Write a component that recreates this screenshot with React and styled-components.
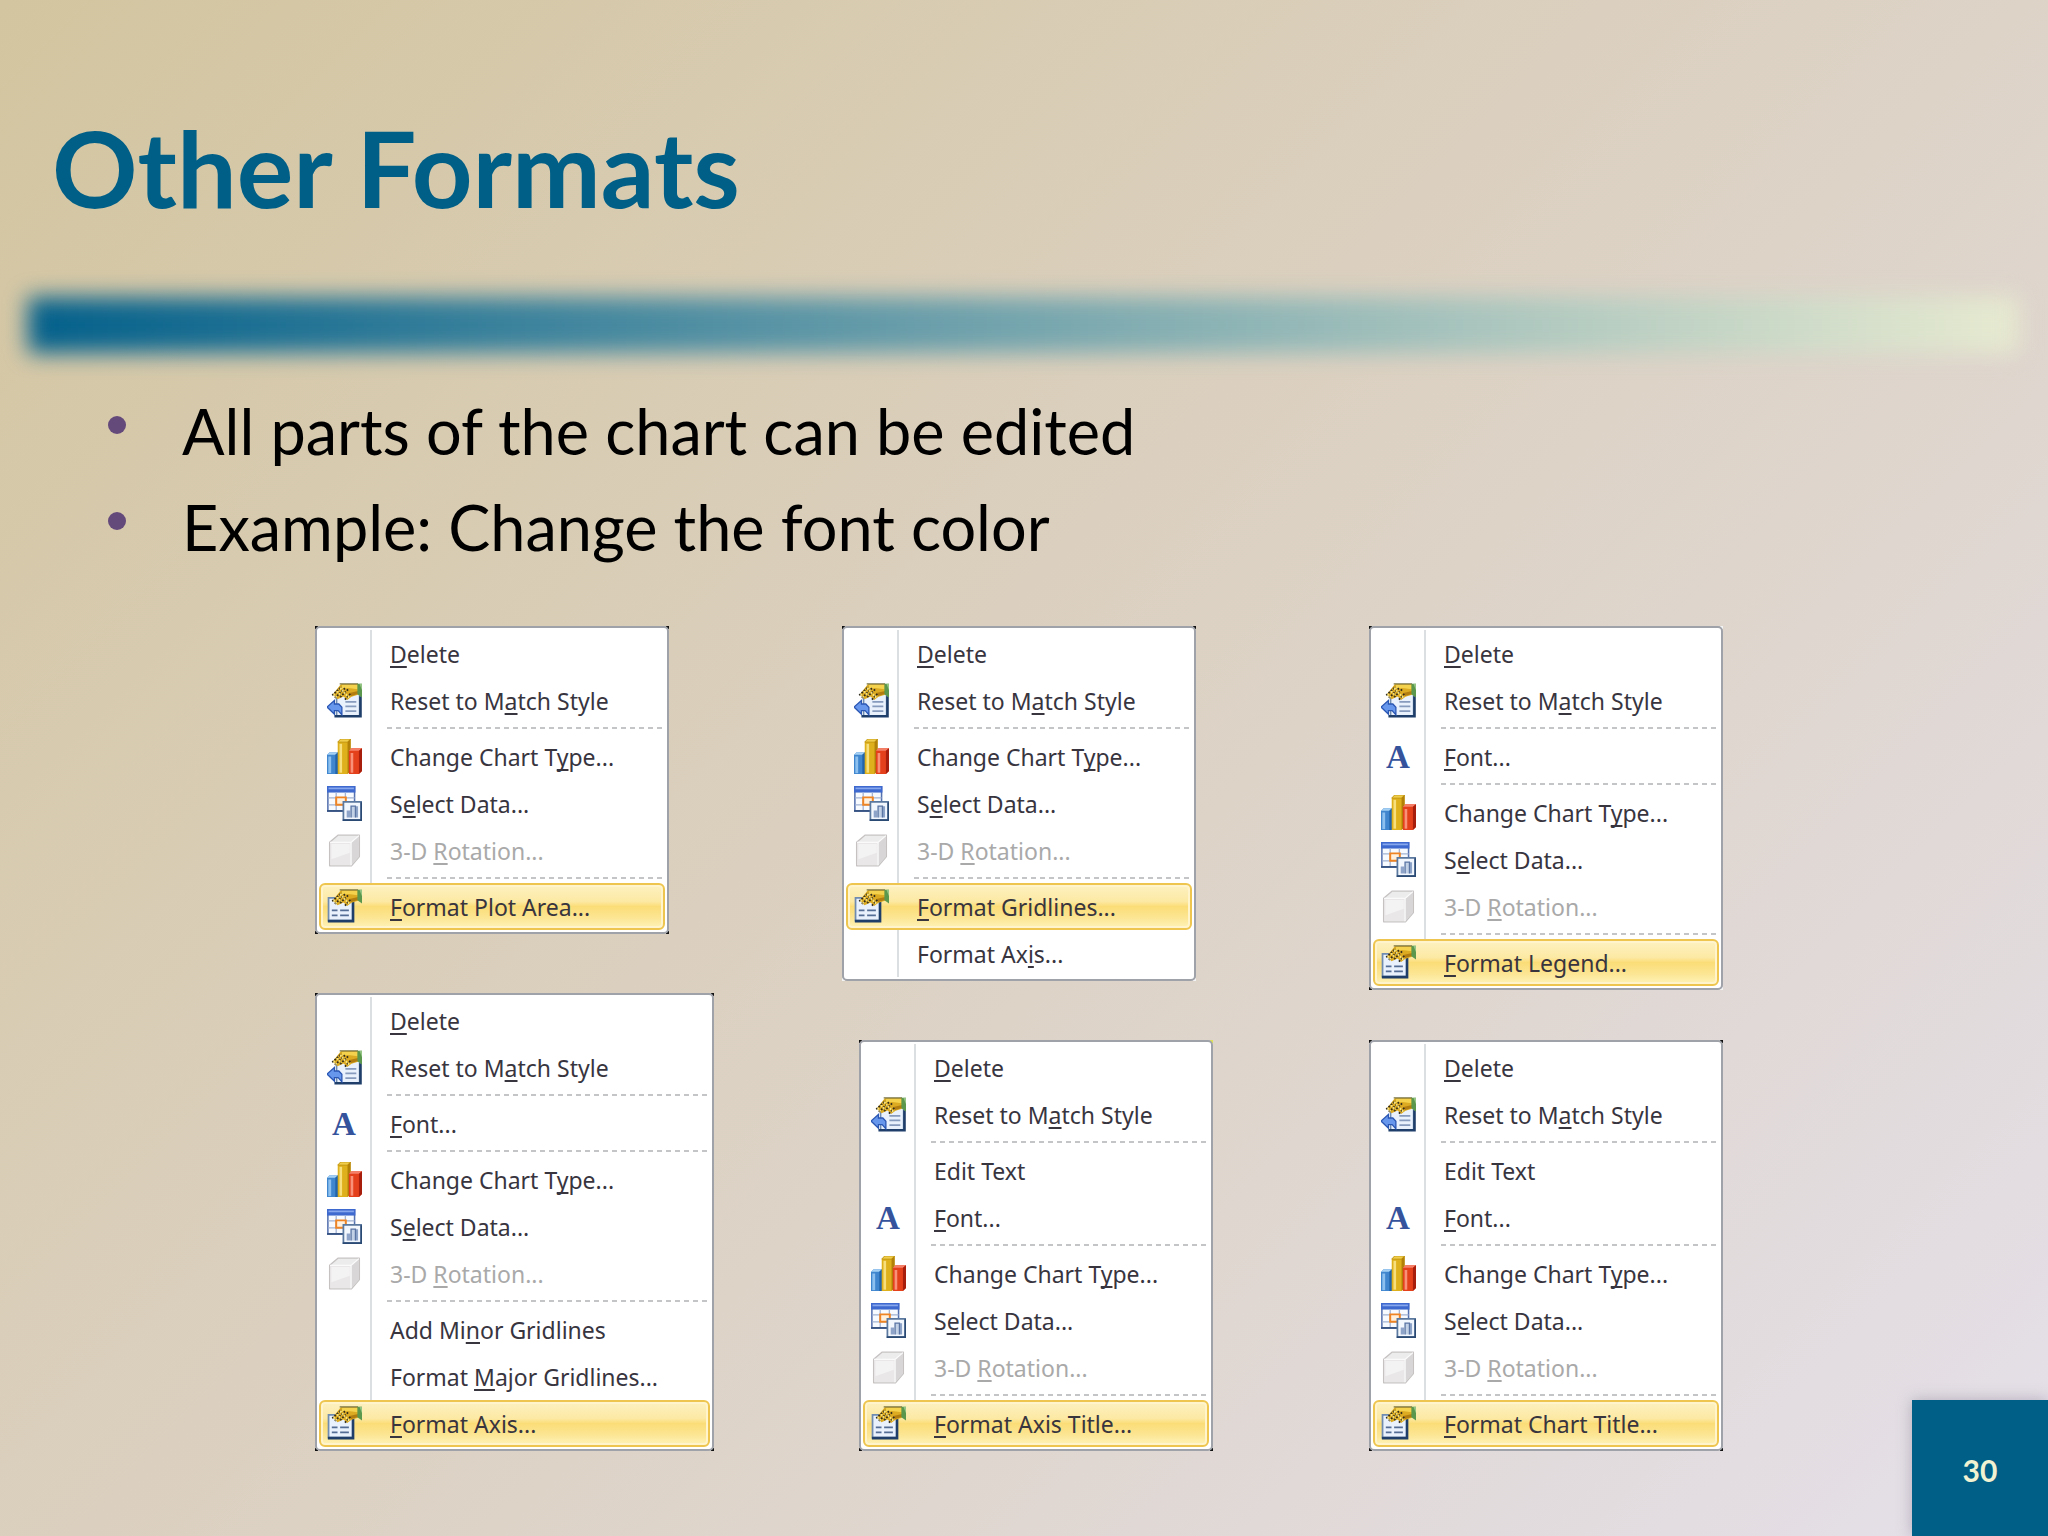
import React from "react";
import styled, { createGlobalStyle, css } from "styled-components";

const GlobalStyle = createGlobalStyle`
  body {
    margin: 0;
  }
`;

const Slide = styled.main`
  box-sizing: border-box;
  min-height: 100vh;
  display: flex;
  flex-direction: column;
  background: linear-gradient(135deg, #d3c59f 0%, #dbd0bf 45%, #dfd6cf 68%, #e5e0ea 100%);
  font-family: Lato, "Liberation Sans", sans-serif;
`;

const Title = styled.h1`
  margin: 0;
  padding: 103px 52px 0;
  color: #005f87;
  font-size: 106px;
  font-weight: 700;
  line-height: 128px;
`;

const Rule = styled.div`
  height: 56px;
  margin: 66px 30px 0 28px;
  background: linear-gradient(to right, #03608b, #e7ead0);
  filter: blur(11px);
`;

const Points = styled.ul`
  margin: 30px 0 0;
  padding: 0 108px;
  list-style: none;
`;

const Point = styled.li`
  display: flex;
  align-items: center;
  color: #000;
  font-size: 63px;
  line-height: 96px;

  &::before {
    content: "";
    width: 18px;
    height: 18px;
    margin: 0 56px 12px 0;
    border-radius: 50%;
    background: #64497b;
  }
`;

const Body = styled.div`
  flex: 1;
  display: flex;
  gap: 16px;
`;

const Menus = styled.section`
  flex: 1;
  display: grid;
  grid-template-columns: repeat(3, 1fr);
  justify-items: start;
  align-items: stretch;
  align-self: flex-start;
  margin: 51px 0 84px;
  padding-left: 315px;
`;

const Column = styled.div`
  display: flex;
  flex-direction: column;
  justify-content: space-between;
  align-items: flex-start;
  gap: 50px;
  min-width: ${(props) => props.$minWidth};
`;

const dot = (color, place) => `linear-gradient(${color}, ${color}) ${place} / 3px 3px no-repeat`;

const Frame = styled.nav`
  width: ${(props) => (props.$wide ? "399px" : "354px")};
  align-self: ${(props) => (props.$end ? "flex-end" : "flex-start")};
  background: ${(props) =>
    ["left top", "right top", "left bottom", "right bottom"]
      .map((place, i) => dot(props.$corners[i], place))
      .join(", ")};
`;

const MenuList = styled.ul`
  margin: 0;
  padding: 2px;
  list-style: none;
  border: 2px solid #9fa2a9;
  border-radius: 5px;
  background: linear-gradient(#dcdfe2, #dcdfe2) 53px 2px / 2px calc(100% - 4px) no-repeat, #fff;
`;

const Item = styled.button`
  box-sizing: border-box;
  display: flex;
  align-items: center;
  width: 100%;
  height: 47px;
  padding: 0 0 0 5px;
  border: 2px solid transparent;
  border-radius: 6px;
  background: none;
  color: #38353f;
  font-family: "Noto Sans", "Open Sans", sans-serif;
  font-size: 23px;
  line-height: 32px;
  text-align: left;

  &:disabled {
    color: #a9a9a9;
  }

  ${(props) =>
    props.$active &&
    css`
      border-color: #eec64f;
      background: linear-gradient(#fdf1c0 0%, #fce9a4 38%, #fbdd78 50%, #fce592 75%, #fef3b8 100%);
      box-shadow: inset 0 0 0 2px #fff4cc;
    `}
`;

const IconCell = styled.span`
  flex: none;
  display: flex;
  justify-content: center;
  width: 36px;
  margin-right: 28px;
`;

const Glyph = styled.svg`
  display: block;
  width: 35px;
  height: 35px;
`;

const LetterIcon = styled.span`
  color: #35529c;
  font-family: "Liberation Serif", serif;
  font-size: 33px;
  font-weight: 700;
`;

const Key = styled.u`
  text-decoration-thickness: 2px;
  text-underline-offset: 3px;
  text-decoration-skip-ink: none;
`;

const Separator = styled.li`
  height: 2px;
  margin: 3px 0 4px 68px;
  background: repeating-linear-gradient(to right, #c3c5c7 0 5px, transparent 5px 9px);
`;

const PageNumber = styled.footer`
  align-self: flex-end;
  display: flex;
  align-items: center;
  justify-content: center;
  width: 136px;
  height: 136px;
  padding-top: 3px;
  box-sizing: border-box;
  background: #005f87;
  box-shadow: 0 0 14px rgba(90, 80, 110, 0.35);
  color: #f1f2d2;
  font-size: 30px;
  font-weight: 700;
`;

const Hand = () => (
  <>
    <path d="M2.6 5.2 6.4.4h7.8v5l-3 .9-2 1.5-1.6-1.6-2.8 1.2z" fill="#dcab22" />
    <path d="M7 .9h7v1.9l-4.2-.5-3.6.4z" fill="#f4d24e" />
    <path d="M11 5.9 14.2 5V3.6l-4 1z" fill="#b27d10" />
    <path d="M5.8.4h8.4" stroke="#7f7a48" strokeWidth=".6" />
    <path d="M13.9.3H16v6.3l-2.1-1.5z" fill="#5b984e" />
    <path d="M14.8.3H16v3z" fill="#93c484" />
    <path d="M2.4 5.6 6.6 1.8M3.6 6.8l4.6-4.4M6 6.4l3.8-3.6M8.2 7.6l2.6-2.8" stroke="#2f2a1c" strokeWidth=".8" strokeDasharray=".8 .6" />
    <path d="M3 5.2 4.4 6.6M4.6 3.8 6.6 5.8M6 2.4l4.2 4.4" stroke="#f7e98e" strokeWidth=".8" strokeDasharray=".7 .6" />
  </>
);

const FormatIcon = () => (
  <Glyph viewBox="0 0 16 16">
    <path d="M.7 4h11.1v10.5H.7z" fill="#e9f1fc" stroke="#6f8bb0" strokeWidth=".8" />
    <path d="M.4 14.7h11.5V5" fill="none" stroke="#1f3f6a" strokeWidth="1.2" />
    <path d="M2.2 9.8h2.6M6 9.8h4M2.2 12h2.6M6 12h4" stroke="#546d94" strokeWidth=".8" />
    <Hand />
  </Glyph>
);

const ResetIcon = () => (
  <Glyph viewBox="0 0 16 16">
    <path d="M4.4 4.8h10.5v10.3H4.4z" fill="#e9f1fc" stroke="#6f8bb0" strokeWidth=".7" />
    <path d="M3.4 15.2h11.9V6" fill="none" stroke="#1f3f6a" strokeWidth="1.2" />
    <path d="M8.4 8.6h5M8.4 10.7h5M8.4 12.8h5" stroke="#869bbd" strokeWidth=".8" />
    <Hand />
    <path d="M0 11 3.4 8v1.6h2l1.4 1.5v3.4l-1.7-1.9H3.4v1.7z" fill="#6797ec" stroke="#2b57b4" strokeWidth=".6" />
  </Glyph>
);

const ChartIcon = () => (
  <Glyph viewBox="0 0 16 16">
    <path d="M0 7.2 1.2 6H5v10H0z" fill="#3f86cf" />
    <path d="M0 7.2 1.2 6H5L3.8 7.2z" fill="#a5d0f3" />
    <path d="M.6 8h1.3v7.6H.6z" fill="#8dc0ef" />
    <path d="M3.8 7.2 5 6v10H3.8z" fill="#2263a9" />
    <path d="M4.9 1.4 6.2 0h4.6v14.6L9.4 16H4.9z" fill="#deb01c" />
    <path d="M4.9 1.4 6.2 0h4.6L9.4 1.4z" fill="#f0ce4c" stroke="#b58a0a" strokeWidth=".3" />
    <path d="M5.7 2.2h1.2v13.2H5.7z" fill="#f6df7c" />
    <path d="M9.4 1.4 10.8 0v14.6L9.4 16z" fill="#b18108" />
    <path d="M10 5.4 11.2 4.2H16v10.4L14.6 16H10z" fill="#e4401c" />
    <path d="M10 5.4 11.2 4.2H16l-1.4 1.2z" fill="#f4806a" />
    <path d="M10.8 6.4H12v9h-1.2z" fill="#f99078" />
    <path d="M14.6 5.4 16 4.2v10.4L14.6 16z" fill="#a81e0c" />
  </Glyph>
);

const DataIcon = () => (
  <Glyph viewBox="0 0 16 16">
    <path d="M.4.4h12.2v11H.4z" fill="#f7faff" stroke="#5470ae" strokeWidth=".7" />
    <path d="M0 0h13v3H0z" fill="#3e69ce" />
    <path d="M.7.7h11.6v.8H.7z" fill="#86a6ee" />
    <path d="M4.2 3v8M8.4 3v8M.6 5.4h12M.6 8.6h12" stroke="#a3b3d2" strokeWidth=".6" />
    <path d="M4.2 5.2h4.4v3.4H4.2z" fill="#fff1dd" stroke="#ee8424" strokeWidth=".9" />
    <path d="M0 11.4h8" stroke="#34517f" strokeWidth=".8" />
    <path d="M7.5 7.2h8.1v8.4H7.5z" fill="#f2f7fd" stroke="#5b789f" strokeWidth=".8" />
    <path d="M7.2 15.6h8.5V7.4" fill="none" stroke="#2a4a74" strokeWidth=".8" />
    <path d="M9 11.2h1.6v3.2H9zM13 9.2h1.2v5.2H13z" fill="#8ea4c8" />
    <path d="M11 14.4V9.2h2v5.2" fill="#c3d1e6" stroke="#5a75a4" strokeWidth=".6" />
  </Glyph>
);

const CubeIcon = () => (
  <Glyph viewBox="0 0 16 16">
    <path d="M1.2 4.2 5 1h9.8v9.8L11.2 15h-10z" fill="#ececec" stroke="#c6c2c2" strokeWidth=".6" strokeLinejoin="round" />
    <path d="M11 4.4 14.6 1.2v9.6L11 14.8z" fill="#d8d6d6" />
    <path d="M1.5 4.4H11v10.3H1.5z" fill="#e9e7e7" />
    <path d="M2 5h8.4v4L2 12z" fill="#f4f3f3" />
    <path d="M1.4 4.3H11L14.6 1.2M11 4.3v10.4" fill="none" stroke="#fafafa" strokeWidth=".6" />
  </Glyph>
);

const icons = {
  reset: <ResetIcon />,
  chart: <ChartIcon />,
  data: <DataIcon />,
  cube: <CubeIcon />,
  format: <FormatIcon />,
  font: <LetterIcon aria-hidden="true">A</LetterIcon>,
};

// An underscore stands before the access key of a label.
const REMOVE = { label: "_Delete" };
const RESET = { label: "Reset to M_atch Style", icon: "reset" };
const FONT = { label: "_Font...", icon: "font" };
const EDIT = { label: "Edit Text" };
const LINE = { separator: true };
const CHART = [
  { label: "Change Chart T_ype...", icon: "chart" },
  { label: "S_elect Data...", icon: "data" },
  { label: "3-D _Rotation...", icon: "cube", disabled: true },
];

const active = (label) => ({ label, icon: "format", active: true });

const BLACK = "#111";
const PALE = "#f4f4f4";

const columns = [
  {
    minWidth: "399px",
    menus: [
      {
        name: "Plot area",
        corners: [BLACK, BLACK, BLACK, BLACK],
        items: [REMOVE, RESET, LINE, ...CHART, LINE, active("_Format Plot Area...")],
      },
      {
        name: "Axis",
        wide: true,
        corners: [BLACK, BLACK, BLACK, BLACK],
        items: [
          REMOVE,
          RESET,
          LINE,
          FONT,
          LINE,
          ...CHART,
          LINE,
          { label: "Add Mi_nor Gridlines" },
          { label: "Format _Major Gridlines..." },
          active("_Format Axis..."),
        ],
      },
    ],
  },
  {
    minWidth: "371px",
    menus: [
      {
        name: "Gridlines",
        corners: [BLACK, BLACK, PALE, PALE],
        items: [
          REMOVE,
          RESET,
          LINE,
          ...CHART,
          LINE,
          active("_Format Gridlines..."),
          { label: "Format Ax_is..." },
        ],
      },
      {
        name: "Axis title",
        end: true,
        corners: [BLACK, "#dfe35a", BLACK, BLACK],
        items: [REMOVE, RESET, LINE, EDIT, FONT, LINE, ...CHART, LINE, active("_Format Axis Title...")],
      },
    ],
  },
  {
    minWidth: "354px",
    menus: [
      {
        name: "Legend",
        corners: [BLACK, PALE, BLACK, PALE],
        items: [REMOVE, RESET, LINE, FONT, LINE, ...CHART, LINE, active("_Format Legend...")],
      },
      {
        name: "Chart title",
        corners: [BLACK, BLACK, BLACK, BLACK],
        items: [REMOVE, RESET, LINE, EDIT, FONT, LINE, ...CHART, LINE, active("_Format Chart Title...")],
      },
    ],
  },
];

const Label = ({ text }) => {
  const at = text.indexOf("_");
  if (at < 0) return <span>{text}</span>;
  return (
    <span>
      {text.slice(0, at)}
      <Key>{text[at + 1]}</Key>
      {text.slice(at + 2)}
    </span>
  );
};

const ContextMenu = ({ menu }) => (
  <Frame aria-label={menu.name} $wide={menu.wide} $end={menu.end} $corners={menu.corners}>
    <MenuList>
      {menu.items.map((item, i) =>
        item.separator ? (
          <Separator key={i} role="separator" />
        ) : (
          <li key={i}>
            <Item type="button" disabled={item.disabled} $active={item.active}>
              <IconCell>{icons[item.icon]}</IconCell>
              <Label text={item.label} />
            </Item>
          </li>
        )
      )}
    </MenuList>
  </Frame>
);

const App = () => {
  return (
    <Slide>
      <GlobalStyle />
      <Title>Other Formats</Title>
      <Rule />
      <Points>
        <Point>All parts of the chart can be edited</Point>
        <Point>Example: Change the font color</Point>
      </Points>
      <Body>
        <Menus>
          {columns.map((column, i) => (
            <Column key={i} $minWidth={column.minWidth}>
              {column.menus.map((menu) => (
                <ContextMenu key={menu.name} menu={menu} />
              ))}
            </Column>
          ))}
        </Menus>
        <PageNumber>30</PageNumber>
      </Body>
    </Slide>
  );
};

export default App;
